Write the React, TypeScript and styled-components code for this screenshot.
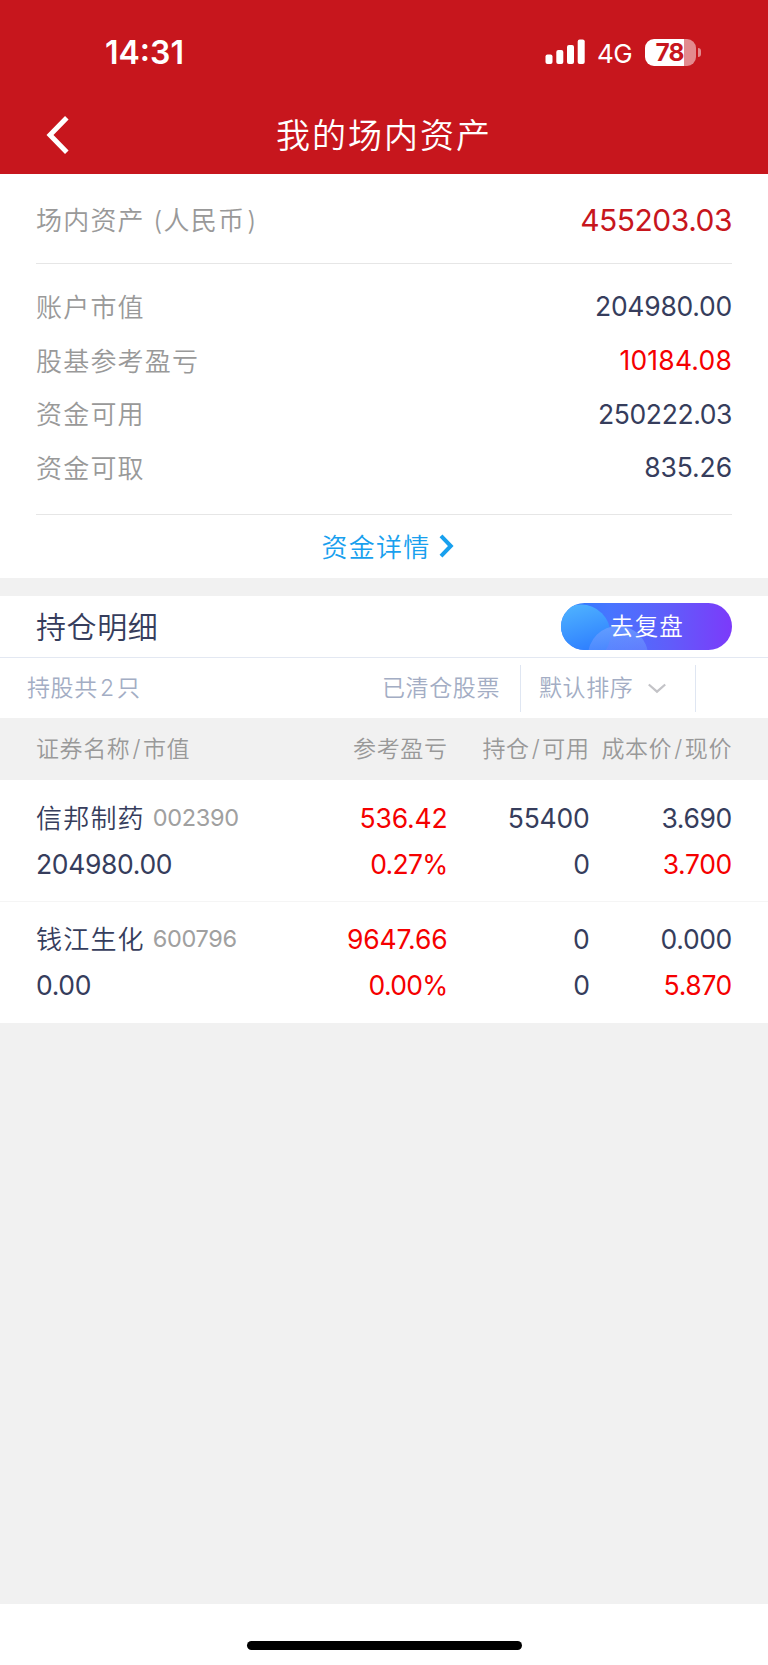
import React from 'react';
import styled, { createGlobalStyle } from 'styled-components';

const GlobalStyle = createGlobalStyle`
  * { box-sizing: border-box; }
  body {
    margin: 0;
    background: #f1f1f1;
    font-family: Inter, "Noto Sans CJK SC", sans-serif;
    font-weight: 400;
    color: #363d5c;
  }
`;

type Tone = 'ink' | 'up' | 'brand' | 'muted';
const tones: Record<Tone, string> = {
  ink: '#363d5c',
  up: '#f50000',
  brand: '#c7161d',
  muted: '#999999',
};

const Page = styled.div`
  display: flex;
  flex-direction: column;
  width: 768px;
  height: 1665px;
  background: #f1f1f1;
  overflow: hidden;
`;

const Header = styled.header`
  height: 174px;
  background: #c7161d;
  color: #fff;
`;

const StatusBar = styled.div`
  display: flex;
  align-items: center;
  justify-content: space-between;
  height: 104px;
  padding: 0 67px 0 105px;
`;

const Clock = styled.span`
  margin-top: 2px;
  font-size: 32px;
  font-weight: 600;
  line-height: 40px;
  letter-spacing: 0;
`;

const StatusIcons = styled.div`
  display: flex;
  align-items: center;
`;

const Network = styled.span`
  margin: 3px 13px 0 12px;
  font-size: 26px;
  line-height: 30px;
  letter-spacing: -0.6px;
`;

const BatteryBody = styled.div`
  display: flex;
  align-items: center;
  justify-content: center;
  width: 51px;
  height: 27px;
  padding-right: 2px;
  border-radius: 9px;
  background: linear-gradient(90deg, #fff 39.5px, #e38a8e 39.5px);
  color: #c7161d;
  font-size: 24.5px;
  font-weight: 700;
  line-height: 27px;
  letter-spacing: -0.8px;
`;

const BatteryCap = styled.div`
  width: 3px;
  height: 9px;
  margin-left: 2px;
  border-radius: 0 4px 4px 0;
  background: #e38a8e;
`;

const NavBar = styled.div`
  display: grid;
  grid-template-columns: 120px 1fr 120px;
  align-items: center;
  height: 63px;
`;

const BackIcon = styled.svg`
  display: block;
  margin: -1px 0 0 46px;
`;

const NavTitle = styled.h1`
  margin: 0;
  font-size: 34px;
  font-weight: 350;
  line-height: 44px;
  letter-spacing: 2px;
  text-align: center;
`;

const AssetCard = styled.section`
  height: 404px;
  padding: 0 36px;
  background: #fff;
`;

const AssetTotal = styled.div`
  display: flex;
  align-items: center;
  justify-content: space-between;
  height: 90px;
  padding-top: 2px;
  border-bottom: 1px solid #e6e6e6;
`;

const AssetList = styled.div`
  height: 251px;
  padding-top: 15.5px;
  border-bottom: 1px solid #e6e6e6;
`;

const AssetRow = styled.div`
  display: flex;
  align-items: center;
  justify-content: space-between;
  height: 53.7px;
`;

const Label = styled.span`
  padding-top: 3px;
  color: ${tones.muted};
  font-size: 26px;
  font-weight: 350;
  line-height: 36px;
  letter-spacing: 1.2px;
`;

const ClosingParen = styled.span`
  margin-left: 2px;
`;

const Amount = styled.span<{ $tone?: Tone; $large?: boolean; $tracking?: number }>`
  color: ${({ $tone = 'ink' }) => tones[$tone]};
  font-size: ${({ $large }) => ($large ? 30 : 26.5)}px;
  line-height: 36px;
  letter-spacing: ${({ $tracking = -0.3 }) => $tracking}px;
`;

const DetailLink = styled.a`
  display: flex;
  align-items: center;
  justify-content: center;
  gap: 9px;
  height: 61px;
  padding-left: 8px;
  color: #18a0ee;
  font-size: 26px;
  font-weight: 350;
  letter-spacing: 1.2px;
`;

const SectionHead = styled.div`
  display: flex;
  align-items: center;
  justify-content: space-between;
  height: 62px;
  margin-top: 18px;
  padding: 0 36px;
  border-bottom: 1px solid #e3e8f2;
  background: #fff;
`;

const SectionTitle = styled.h2`
  margin: 0;
  padding-top: 1px;
  font-size: 30px;
  font-weight: 350;
  line-height: 40px;
  letter-spacing: 0.6px;
`;

const ReviewButton = styled.button`
  position: relative;
  width: 171px;
  height: 47px;
  padding: 0;
  border: 0;
  border-radius: 24px;
  overflow: hidden;
  background: linear-gradient(90deg, #2a7dff 0%, #4775ff 28%, #5f5efa 62%, #7c3afa 100%);
  color: #fff;
  font: inherit;
  font-size: 23.5px;
  font-weight: 350;
  letter-spacing: 1.2px;
`;

const ButtonArt = styled.svg`
  position: absolute;
  inset: 0;
`;

const ButtonText = styled.span`
  position: relative;
  padding-left: 1px;
  line-height: 47px;
`;

const FilterBar = styled.div`
  display: flex;
  align-items: center;
  height: 60px;
  padding-left: 27px;
  background: #fff;
  color: #a3adc4;
  font-size: 23px;
  font-weight: 350;
  line-height: 30px;
  letter-spacing: 0.6px;
`;

const HoldingCount = styled.span`
  flex: 1;
  word-spacing: -4.8px;
`;

const ClearedLink = styled.span`
  padding-right: 20px;
`;

const SortPicker = styled.div`
  display: flex;
  align-items: center;
  justify-content: space-between;
  width: 176px;
  height: 47px;
  margin-right: 72px;
  padding: 0 29px 0 18px;
  border: solid #dfe6f2;
  border-width: 0 1px;
`;

const TableGrid = styled.div`
  display: grid;
  grid-template-columns: 251px 160.5px 142px 142.5px;
  padding: 0 36px;
`;

const TableHead = styled(TableGrid)`
  align-items: center;
  height: 62px;
  color: ${tones.muted};
  font-size: 23px;
  font-weight: 350;
  line-height: 30px;
  letter-spacing: 0.6px;
  white-space: nowrap;
`;

const HeadCell = styled.span<{ $end?: boolean }>`
  text-align: ${({ $end }) => ($end ? 'right' : 'left')};
`;

const Slash = styled.span`
  margin: 0 2px;
`;

const HoldingRow = styled(TableGrid)`
  height: 122px;
  padding-top: 15px;
  background: #fff;
  border-bottom: 1px solid #f5f5f5;

  & + & {
    height: 120.5px;
    padding-top: 14px;
    border-bottom: 0;
  }
`;

const Cell = styled.div<{ $end?: boolean }>`
  display: flex;
  flex-direction: column;
  align-items: ${({ $end }) => ($end ? 'flex-end' : 'flex-start')};
`;

const CellLine = styled.div<{ $tone?: Tone; $tracking?: number }>`
  display: flex;
  align-items: center;
  height: 46px;
  color: ${({ $tone = 'ink' }) => tones[$tone]};
  font-size: 26.5px;
  line-height: 36px;
  letter-spacing: ${({ $tracking = -0.35 }) => $tracking}px;
  white-space: nowrap;
`;

const StockName = styled.span`
  padding-top: 1px;
  font-size: 26px;
  font-weight: 350;
  letter-spacing: 1.2px;
`;

const StockCode = styled.span`
  margin-left: 8px;
  color: #a0a0a0;
  font-size: 23.5px;
`;

const HomeArea = styled.footer`
  display: flex;
  justify-content: center;
  height: 61px;
  margin-top: auto;
  padding-top: 37px;
  background: #fff;
`;

const HomeBar = styled.div`
  width: 275px;
  height: 9px;
  border-radius: 5px;
  background: #000;
`;

const assets: { label: string; value: string; tone?: Tone; tracking?: number }[] = [
  { label: '账户市值', value: '204980.00', tracking: -0.25 },
  { label: '股基参考盈亏', value: '10184.08', tone: 'up', tracking: 0.2 },
  { label: '资金可用', value: '250222.03', tracking: -0.4 },
  { label: '资金可取', value: '835.26', tracking: -0.1 },
];

const holdings = [
  { name: '信邦制药', code: '002390', value: '204980.00', profit: '536.42', rate: '0.27%', held: '55400', free: '0', cost: '3.690', price: '3.700' },
  { name: '钱江生化', code: '600796', value: '0.00', profit: '9647.66', rate: '0.00%', held: '0', free: '0', cost: '0.000', price: '5.870' },
];

export default function App() {
  return (
    <Page>
      <GlobalStyle />
      <Header>
        <StatusBar>
          <Clock>14:31</Clock>
          <StatusIcons>
            <svg width="40" height="26" viewBox="0 0 40 26" fill="#fff">
              <rect x="0.5" y="15.5" width="7" height="9.5" rx="2" />
              <rect x="11.3" y="11" width="7" height="14" rx="2" />
              <rect x="22" y="6" width="7" height="19" rx="2" />
              <rect x="32.7" y="0.5" width="7" height="24.5" rx="2" />
            </svg>
            <Network>4G</Network>
            <BatteryBody>78</BatteryBody>
            <BatteryCap />
          </StatusIcons>
        </StatusBar>
        <NavBar>
          <BackIcon width="24" height="40" viewBox="0 0 24 40">
            <path d="M20.8 2.8 L4 20 L20.8 37.2" fill="none" stroke="#fff" strokeWidth="5" />
          </BackIcon>
          <NavTitle>我的场内资产</NavTitle>
        </NavBar>
      </Header>

      <AssetCard>
        <AssetTotal>
          <Label>场内资产 (人民币<ClosingParen>)</ClosingParen></Label>
          <Amount $tone="brand" $large $tracking={-0.5}>455203.03</Amount>
        </AssetTotal>
        <AssetList>
          {assets.map((a) => (
            <AssetRow key={a.label}>
              <Label>{a.label}</Label>
              <Amount $tone={a.tone} $tracking={a.tracking}>{a.value}</Amount>
            </AssetRow>
          ))}
        </AssetList>
        <DetailLink>
          资金详情
          <svg width="15" height="24" viewBox="0 0 15 24">
            <path d="M2 1.8 L11.8 12 L2 22.2" fill="none" stroke="#18a0ee" strokeWidth="4" />
          </svg>
        </DetailLink>
      </AssetCard>

      <SectionHead>
        <SectionTitle>持仓明细</SectionTitle>
        <ReviewButton>
          <ButtonArt width="171" height="47" viewBox="0 0 171 47">
            <defs>
              <linearGradient id="orbLarge" x1="0" y1="0" x2="0.3" y2="1">
                <stop offset="0" stopColor="#52b8ff" />
                <stop offset="1" stopColor="#2a78ff" />
              </linearGradient>
              <linearGradient id="orbSmall" x1="0" y1="0" x2="0" y2="1">
                <stop offset="0" stopColor="#6fa0ff" stopOpacity="0.75" />
                <stop offset="0.7" stopColor="#6f90ff" stopOpacity="0.25" />
              </linearGradient>
            </defs>
            <circle cx="20" cy="31" r="29.5" fill="url(#orbLarge)" />
            <circle cx="57" cy="53" r="30" fill="url(#orbSmall)" />
          </ButtonArt>
          <ButtonText>去复盘</ButtonText>
        </ReviewButton>
      </SectionHead>

      <FilterBar>
        <HoldingCount>持股共 2 只</HoldingCount>
        <ClearedLink>已清仓股票</ClearedLink>
        <SortPicker>
          默认排序
          <svg width="18" height="11" viewBox="0 0 18 11">
            <path d="M0.8 1.5 L9 8.7 L17.2 1.5" fill="none" stroke="#c3c3c7" strokeWidth="2.2" />
          </svg>
        </SortPicker>
      </FilterBar>

      <TableHead>
        <HeadCell>证券名称<Slash>/</Slash>市值</HeadCell>
        <HeadCell $end>参考盈亏</HeadCell>
        <HeadCell $end>持仓<Slash>/</Slash>可用</HeadCell>
        <HeadCell $end>成本价<Slash>/</Slash>现价</HeadCell>
      </TableHead>

      {holdings.map((h) => (
        <HoldingRow key={h.code}>
          <Cell>
            <CellLine>
              <StockName>{h.name}</StockName>
              <StockCode>{h.code}</StockCode>
            </CellLine>
            <CellLine>{h.value}</CellLine>
          </Cell>
          <Cell $end>
            <CellLine $tone="up" $tracking={-0.15}>{h.profit}</CellLine>
            <CellLine $tone="up" $tracking={-0.7}>{h.rate}</CellLine>
          </Cell>
          <Cell $end>
            <CellLine $tracking={-0.2}>{h.held}</CellLine>
            <CellLine>{h.free}</CellLine>
          </Cell>
          <Cell $end>
            <CellLine>{h.cost}</CellLine>
            <CellLine $tone="up">{h.price}</CellLine>
          </Cell>
        </HoldingRow>
      ))}

      <HomeArea>
        <HomeBar />
      </HomeArea>
    </Page>
  );
}
